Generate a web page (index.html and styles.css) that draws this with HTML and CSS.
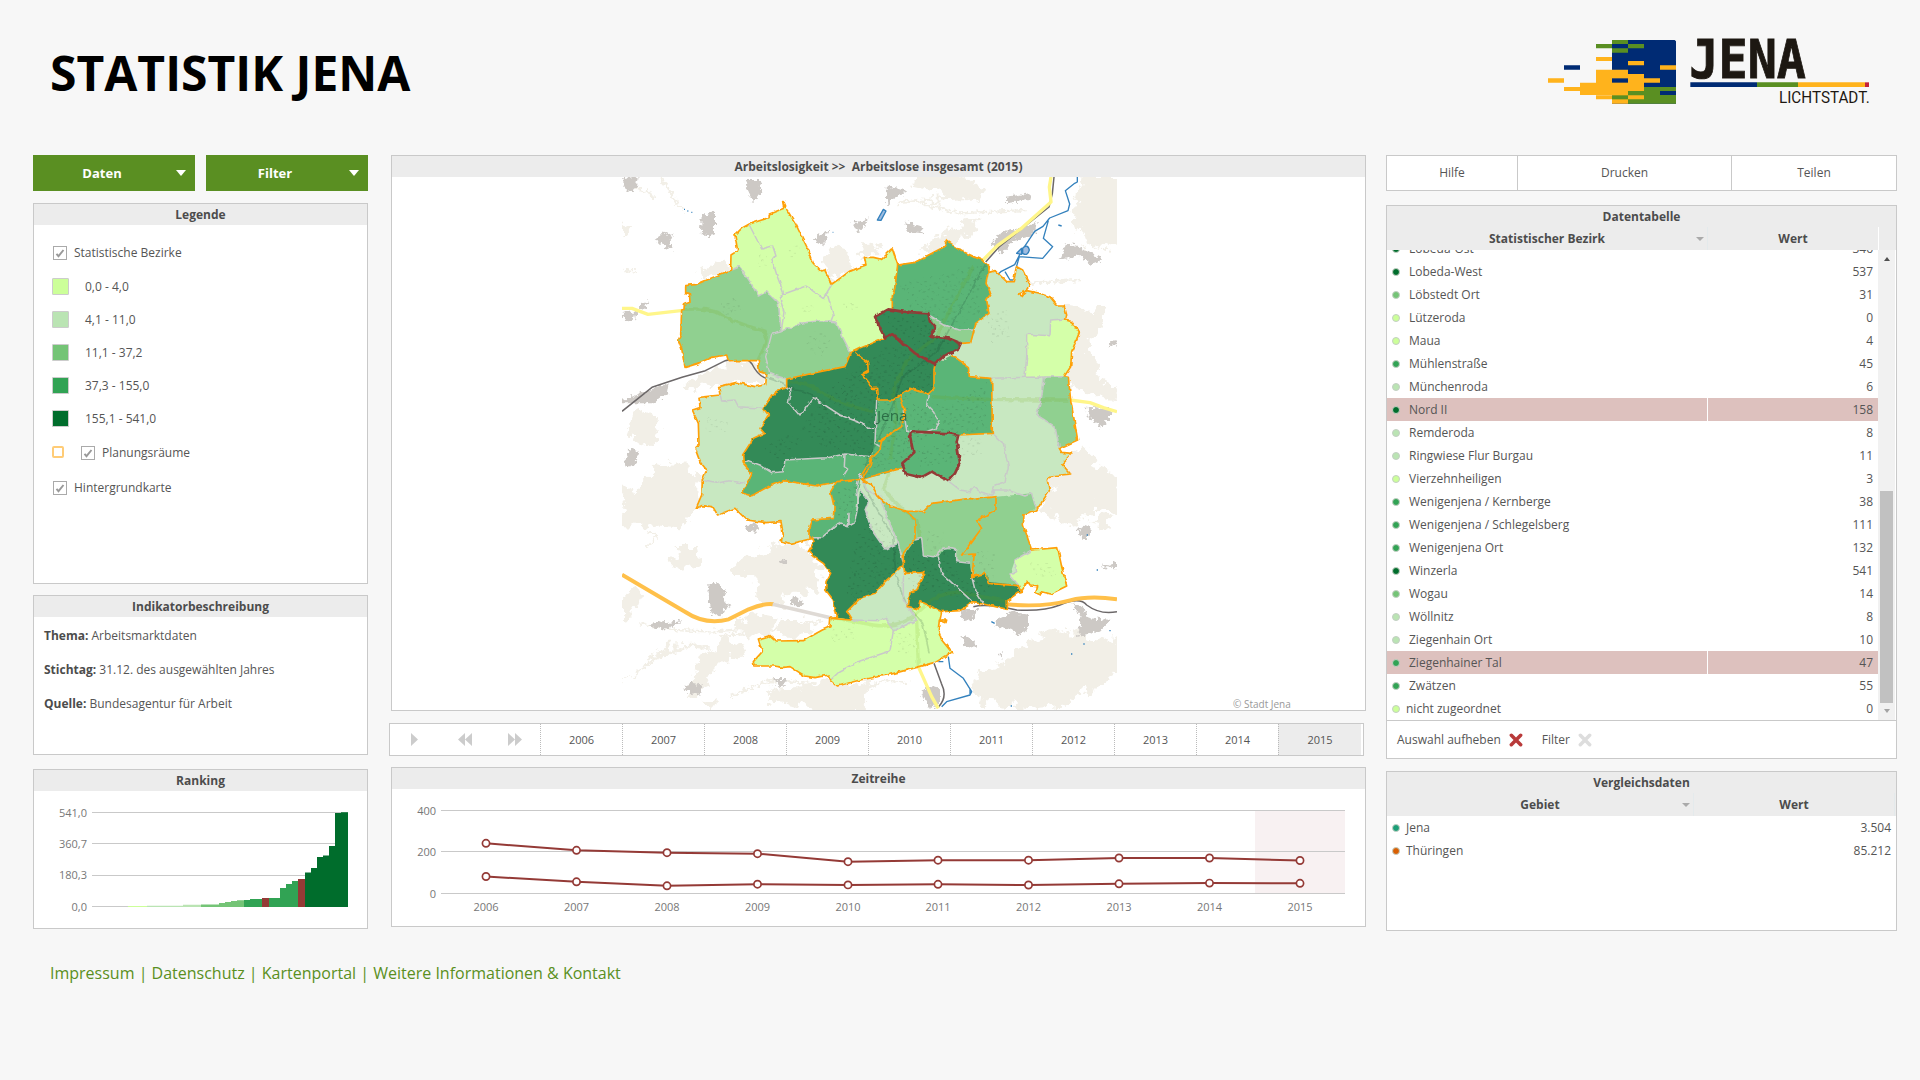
FILE: index.html
```
<!DOCTYPE html>
<html lang="de">
<head>
<meta charset="utf-8">
<title>Statistik Jena</title>
<link rel="stylesheet" href="styles.css">
</head>
<body>
<header class="top">
  <h1>STATISTIK JENA</h1>
  <svg class="logo" viewBox="0 0 1140 300" role="img" aria-label="Jena Lichtstadt">
    <path fill="#002b74" d="M246 60H434l4 4V251H246z"/>
    <path fill="#5a8f22" d="M246 60h48v12h48v13h-48v13h-48V85h-48V72h48zM342 201h96v50H294v-38h48z"/>
    <path fill="#002b74" d="M246 72h48v13h-48zM102 136h48v13h-48zM390 213h48v12h-48z"/>
    <path fill="#ffb31c" d="M198 111h48v12h-48zM294 123h48v13h-48zM390 136h48v13h-48zM198 149h96v13h48v13h48v13h-48v25h-48v38h-48v-13h-48v-12h48v-1h-48v-12h-48v-13h48zM54 175h48v13H54zM102 201h48v12h-48zM150 188h48v13h-48zM150 213h48v12h-48zM294 226h48v12h-48z"/>
    <path fill="#002b74" d="M246 175h48v13h-48z"/>
    <path fill="#5a8f22" d="M246 226h48v12h-48z"/>
    <text class="logo-name" x="478" y="175" textLength="350" lengthAdjust="spacingAndGlyphs">JENA</text>
    <path fill="#002b74" d="M481 187h200v14H481z"/><path fill="#5a8f22" d="M681 187h123v14H681z"/>
    <path fill="#ffb31c" d="M804 187h201v14H804z"/><path fill="#c4213a" d="M1005 187h12v14h-12z"/>
    <text class="logo-claim" x="747" y="250" textLength="272" lengthAdjust="spacingAndGlyphs">LICHTSTADT.</text>
  </svg>
</header>

<main class="board">
  <section class="col col-left">
    <div class="menus">
      <button class="menu"><span>Daten</span><i class="caret"></i></button>
      <button class="menu"><span>Filter</span><i class="caret"></i></button>
    </div>
    <article class="panel legend-panel">
      <h2>Legende</h2>
      <ul class="legend">
        <li class="layer"><span class="check"><svg viewBox="0 0 12 12"><path d="M2.5 6.8l2 2.4L9.5 3"/></svg></span>Statistische Bezirke</li>
        <li class="cls"><i class="swatch c1"></i>0,0 - 4,0</li>
        <li class="cls"><i class="swatch c2"></i>4,1 - 11,0</li>
        <li class="cls"><i class="swatch c3"></i>11,1 - 37,2</li>
        <li class="cls"><i class="swatch c4"></i>37,3 - 155,0</li>
        <li class="cls"><i class="swatch c5"></i>155,1 - 541,0</li>
        <li class="layer plan"><i class="outline"></i><span class="check"><svg viewBox="0 0 12 12"><path d="M2.5 6.8l2 2.4L9.5 3"/></svg></span>Planungsräume</li>
        <li class="layer last"><span class="check"><svg viewBox="0 0 12 12"><path d="M2.5 6.8l2 2.4L9.5 3"/></svg></span>Hintergrundkarte</li>
      </ul>
    </article>
    <article class="panel info-panel">
      <h2>Indikatorbeschreibung</h2>
      <div class="info">
        <p><b>Thema:</b> Arbeitsmarktdaten</p>
        <p><b>Stichtag:</b> 31.12. des ausgewählten Jahres</p>
        <p><b>Quelle:</b> Bundesagentur für Arbeit</p>
      </div>
    </article>
    <article class="panel rank-panel">
      <h2>Ranking</h2>
      <svg class="rank" width="333" height="137" viewBox="34 791 333 137">
        <path class="grid" d="M92 812.5H348M92 843.5H348M92 875.5H348M92 906.5H348"/>
        <g class="axis end"><text x="87" y="817">541,0</text><text x="87" y="848">360,7</text><text x="87" y="879">180,3</text><text x="87" y="911">0,0</text></g>
        <path fill="#cf9" d="M128 907v-1h19v1z"/>
        <path fill="#bae4b3" d="M147 907v-1.3h36v-1h18V907z"/>
        <path fill="#74c476" d="M201 907v-2.5h18v-1.5h6v-1h6v-1h6v-.8h7V907z"/>
        <path fill="#31a354" d="M244 907v-7h6v-1h12v7h7v-8h11v-10h6v-4h6v-3h6V907z"/>
        <path fill="#943a36" d="M262 907v-9h7v9zM298 907v-28h7v28z"/>
        <path fill="#31a354" d="M269 907v-9h11v9z"/>
        <path fill="#006d2c" d="M305 907v-34.500h6v-4.500h6v-11h6v-1.500h6v-9.500h6v-33h6v-.8h7V907z"/>
      </svg>
    </article>
  </section>

  <section class="col col-mid">
    <article class="panel map-panel">
      <h2 class="pre">Arbeitslosigkeit &gt;&gt;  Arbeitslose insgesamt (2015)</h2>
      <svg class="map" width="495" height="534" viewBox="6 21 1485 1602">
        <defs>
          <pattern id="houses" width="74" height="66" patternUnits="userSpaceOnUse">
            <path d="M3 5h5v4h-5zM14 12h4v6h-4zM25 3h7v4h-7zM41 14h4v4h-4zM55 7h5v6h-5zM66 20h4v4h-4zM8 28h6v4h-6zM22 33h4v5h-4zM35 25h6v6h-6zM51 36h4v4h-4zM62 42h6v4h-6zM5 50h4v4h-4zM18 56h7v4h-7zM33 47h4v6h-4zM45 57h6v4h-6zM68 60h4v4h-4zM29 17h3v3h-3zM48 24h3v3h-3z"/>
          </pattern>
          <filter id="coast" x="-10%" y="-10%" width="120%" height="120%" color-interpolation-filters="sRGB">
            <feTurbulence type="fractalNoise" baseFrequency="0.03" numOctaves="4" seed="7"/>
            <feDisplacementMap in="SourceGraphic" scale="62" xChannelSelector="R" yChannelSelector="G"/>
          </filter>
          <filter id="scatter" x="-10%" y="-10%" width="120%" height="120%" color-interpolation-filters="sRGB">
            <feTurbulence type="fractalNoise" baseFrequency="0.09" numOctaves="2" seed="3"/>
            <feDisplacementMap in="SourceGraphic" scale="26" xChannelSelector="R" yChannelSelector="G"/>
          </filter>
          <filter id="survey" x="-5%" y="-5%" width="110%" height="110%" color-interpolation-filters="sRGB">
            <feTurbulence type="fractalNoise" baseFrequency="0.055" numOctaves="2" seed="11"/>
            <feDisplacementMap in="SourceGraphic" scale="11" xChannelSelector="R" yChannelSelector="G"/>
          </filter>
          <path id="city" d="M490 95 500 118 525 158 543 195 565 240 580 280 605 303 614 300 636 342 660 325 690 303 738 285 733 262 760 262 785 268 817 237 833 285 885 277 920 258 970 232 980 212 1030 245 1088 272 1108 290 1105 308 1125 302 1160 335 1180 335 1190 290 1208 300 1230 345 1215 365 1195 372 1205 378 1220 362 1260 370 1290 380 1310 405 1332 405 1340 435 1337 450 1355 455 1378 488 1355 545 1352 590 1332 620 1345 622 1352 690 1373 810 1318 835 1325 847 1355 850 1325 882 1352 912 1290 918 1282 930 1288 962 1250 1020 1212 1033 1210 1065 1235 1140 1313 1133 1325 1190 1340 1248 1292 1272 1265 1265 1262 1275 1247 1268 1253 1250 1230 1248 1222 1235 1203 1267 1192 1270 1162 1292 1162 1318 1090 1302 1058 1298 1020 1322 965 1325 960 1350 980 1350 978 1358 958 1350 955 1380 965 1410 995 1447 945 1478 810 1513 720 1530 652 1548 632 1530 625 1515 585 1523 555 1518 510 1490 490 1492 462 1488 402 1488 400 1475 427 1445 415 1407 450 1397 470 1413 550 1412 580 1395 607 1380 630 1370 632 1345 652 1343 640 1290 617 1260 618 1235 632 1210 610 1180 580 1160 565 1145 582 1115 578 1105 545 1113 513 1120 483 1113 490 1095 483 1055 440 1058 380 1050 345 1015 293 1035 278 1010 245 1007 228 1015 245 975 247 930 260 900 240 875 225 835 237 825 235 760 217 720 240 713 237 682 300 675 296 650 350 637 405 650 437 645 440 612 418 605 415 572 325 572 320 555 275 562 235 580 195 592 185 535 175 510 182 495 185 420 192 418 193 403 210 397 208 370 197 368 197 347 230 343 332 300 333 255 353 242 345 195 365 175 388 162 447 143 448 132 492 115 488 95z"/>
        </defs>
        <g filter="url(#coast)">
          <path class="forest" d="M6 150l25 30-25 8zM232 305l92-28 15 28-97 28zM606 300l25-66 30-10 32 50 0 35-57 28-25-30zM710 248l30-32 28 18 17 22-50 0-5 20zM830 100l250-15 10-30-60-45h-130l-30 30 70 15 40 15-10 12-120 8zM980 185l110-50-50 65-80 45-60 0zM1390 15h115v220l-60-10-40 20-20-60-30-10zM1330 410l45 5 10 15 50-20 26 5-18 60-40 30 20 70 28 60-40 20-50-10-20-50 20-80zM1340 640l60 0 90 15v30l-90-10zM1400 890l105 20v120l-80-20-60 60-70-30-30-20 50-90zM30 745l40-25 50 25-10 70-60 10-25-40zM200 640l130-65 70 5 35 60-35 5-50-13-54 13-80 22zM20 780h90l20 10-80 20zM0 970l70-30 60-60 30 10 20-20 20 20 40 30-10 95-40 60-180-10zM170 1125l60 0 10 45-20 30-20-15-50 5 20-30zM12 1280l20-25 25 20-20 60-25 5zM330 1180l90-30 60-30 40-15 60 40 30 40-15 30 0 50-80 0-40 60-60-30-10-80-80-10zM360 1350l50-30 50 30 0 50-100-10zM480 1350h70l40 10-40 40-60 0zM6 1530l140-100 120-5v15l-80-5-90 40-60 40zM250 1450l60-40 80 20-10 30-60 5-50 50-30 60-40 10 20-60zM440 1560l130-15 90-20 90 10-10 60-40 40h-100l-60-30-80-10zM240 1610l50-35 0 30-15 20zM1060 1530l100-60 70-60 110-30 80 40 85-20v110l-80 40-100 60-100 10-160-30zM1180 830l60 0 80 40 70-40 40 40-60 50-70 30-50 80-60-10zM1400 1060l60-30 30 10-30 30z"/>
        </g>
        <g class="tracks" filter="url(#scatter)"><path d="M120 25l25 30 20 40 25 25M40 50l50 20 12 22M10 300l35 4M80 1080l30 20-30 35M60 1360l100 20 120 5 160-15M300 1400l150-20 160-30M330 1580l120-50 140 10M735 1560l60-30 70 10M900 100l120 30 200-10M1000 340l100 20 100-20 180-10"/></g>
        <g filter="url(#scatter)">
        <path class="built" d="M6 25l50-5-5 30-30 20zM380 30l40 0 5 35-25 35-22-45zM245 135l40-10 0 65-25 10-17-15zM104 210l30-25 22 10-8 20 12 10 0 15-22-5-10-10zM585 205l40-25-5 20-10 25-20-10zM697 160l50-15-15 25-15 20-10-20zM800 50l30 5 30 10-40 20-18 25zM856 155l50 15 2 20-48-5zM1158 80l75-10-5 20-70 10zM1140 190l90-25 20-10-5 40-70 20-30 35-30-30zM1318 270l20-50 40 10 75 40-40 15-35-30-40 10zM60 400l28-8-12 25-16-3zM10 425l40 0-5 20-30 10zM6 690l140-50-5 30-40 30-95 0zM1400 710l70 5 3 25-30 30-40-30zM1460 530l30-20v12l-28 10zM12 870l20-35 25 10-15 40-20 5zM376 1065l38-2-2 22-30-2zM265 1240l35 0 5 25 15-5-8 35 18 12-20 12-5 20-30-10-8-40zM480 1165l25 12-22 10zM505 1295l20-15 28 18-18 14zM85 1365l45-12 20 5 35-5-40 25-20 0zM193 1555l15-18 40 8-5 25-25 5zM466 1527l38 0-15 20-20 0zM1020 1318l50-2-10 30-30 5zM1127 1350l50-25 50 10 0 40-30 20-30-20-40-5zM1354 1300l30 5 25 40 65 5-30 30-70 20 10-60zM1375 1075l30-10 10 20-20 25-15-10zM1440 1190l51-15v20zM1020 1395l45 20-2 20-30-10zM1135 1455l12-10 0 22zM900 1570l20-20 40 5 0 50-30 10z"/>
        </g>
        <g class="rail"><path d="M6 724l90-72 90-30 70-20 60-30q60-20 80 10 20 40 50 45M1302 21l-5 50-10 40-150 120-40 45M1060 1310q40-10 130 10 80 5 130-15 60-25 80 0 40 30 91 20M942 1480l22 60q20 40-8 70"/></g>
        <g class="water"><path d="M1372 21v15l-8 4-28 22 13 40-5 20-55 22-20 25-25 15-40 60-20 40-40 20-35 33M1285 152l-15 53 28 25-30 35-70-5-10 35M985 1460l5 35 40 30 25 40-5 10-70 20-15 15M1155 305l15 25 10 0M1050 1555v18M1315 165l10 3"/><path class="pond" d="M772 150l18-32 8 5-15 28zM1208 235q15-15 20 5-5 20-20 10zM1190 250l15-15v18z"/><path d="M192 118h3M202 123h3M214 127h3M638 187h2M1114 1355l10 5M1400 1095h4M1353 1452h4M1390 1422h4M1172 1608h4M1430 1200h4M1468 1382h4M955 1475h15"/></g>
        <g class="road-yellow"><path d="M6 415h30l48 18 105-12M1293 21l-5 30 5 45-90 80-70 50-45 45M1350 690l60 8 40 15 41 12M895 1490l40 90 20 35"/></g>
        <path class="road-orange" d="M6 1214l190 112q60 40 130 22l60-30q50-20 75-15"/>
        <path class="road-gray" d="M458 1303l180 42"/>
        <path class="road-orange" d="M1160 1303q110 10 190-12 60-15 141-3"/>

        <g filter="url(#survey)">
        <use href="#city" fill="#c8e8c1"/>
        <path fill="#d4ffa9" d="M332 300 333 255 353 242 345 195 365 175 388 162 447 143 448 132 492 115 490 95 500 118 525 158 543 195 565 240 580 280 605 303 614 300 636 342 660 325 690 303 738 285 733 262 760 262 785 268 817 237 833 285 825 350 817 378 817 420 765 440 797 503 720 535 692 548 670 505 648 455 600 452 540 460 484 485 480 430 475 400 440 365 415 378 390 335 358 290z"/>
        <path fill="#90d090" d="M332 300 358 290 390 335 415 378 440 365 475 400 484 485 540 460 600 452 648 455 670 505 692 548 675 590 600 605 500 627 450 612 440 612 418 605 415 572 325 572 320 555 275 562 235 580 195 592 185 535 175 510 182 495 185 420 192 418 193 403 210 397 208 370 197 368 197 347 230 343z"/>
        <path fill="#5ab577" d="M833 285 885 277 920 258 970 232 980 212 1030 245 1088 272 1108 290 1098 340 1112 370 1100 390 1107 430 1067 460 1052 518 1022 520 985 505 930 450 817 420 817 378z"/>
        <path fill="#90d090" d="M930 437 975 465 1018 480 1065 480 1052 518 1022 520 985 505 945 500 930 497 948 475z"/>
        <path fill="#338a57" d="M500 627 560 615 600 605 675 590 692 548 720 535 797 503 765 440 805 418 850 425 925 430 930 455 948 475 930 498 985 505 1022 520 1013 540 975 555 945 582 942 655 925 672 870 655 845 670 820 690 775 690 770 780 765 830 750 860 675 855 620 863 495 870 490 905 455 908 420 885 385 872 370 880 368 855 400 805 433 790 420 775 445 735 430 715 455 675 500 650z"/>
        <path fill="#5ab577" d="M775 690 820 690 845 670 870 655 925 672 942 655 942 600 945 582 995 555 1045 590 1048 620 1115 625 1117 790 1015 795 1010 900 845 895 785 915 720 928 700 930 650 935 590 948 490 932 450 947 395 977 368 968 395 910 370 880 385 872 420 885 455 908 490 905 495 870 620 863 675 852 755 860 770 780z"/>
        <path fill="#c8e8c1" d="M1015 795 1117 790 1140 830 1140 940 1040 940 985 933 1005 910 1020 878z"/>
        <path fill="#5ab577" d="M650 935 725 905 715 960 710 1010 705 1055 685 1065 655 1060 605 1103 567 1105 567 1070 575 1050 640 1045 642 1010 632 965z"/>
        <path fill="#338a57" d="M720 965 745 995 735 1020 755 1080 795 1137 835 1120 845 1160 850 1185 795 1235 765 1270 720 1285 680 1325 695 1350 652 1343 640 1290 617 1260 618 1235 632 1210 610 1180 580 1160 565 1145 582 1115 578 1105 605 1103 655 1060 685 1068 705 1055 715 1000z"/>
        <path fill="#90d090" d="M780 980 805 1005 855 1023 910 1025 935 1000 1050 985 1060 988 1128 980 1235 970 1250 1015 1212 1033 1210 1065 1235 1140 1185 1170 1170 1215 1195 1245 1105 1235 1060 1220 1050 1180 1010 1175 1010 1140 970 1138 955 1160 910 1155 905 1105 885 1110 850 1160 835 1120z"/>
        <path fill="#338a57" d="M885 1110 905 1105 910 1155 955 1160 970 1138 1010 1140 1010 1175 1050 1180 1055 1220 1100 1210 1105 1235 1195 1245 1200 1265 1162 1292 1162 1318 1090 1302 1058 1298 1020 1322 965 1325 900 1295 895 1317 865 1310 870 1267 890 1260 915 1207 855 1210 850 1160z"/>
        <path fill="#d4ffa9" d="M632 1345 652 1343 695 1350 780 1352 800 1345 820 1383 890 1350 865 1312 895 1317 900 1295 965 1325 960 1350 955 1380 965 1410 995 1447 945 1478 810 1513 720 1530 652 1548 632 1530 625 1515 585 1523 555 1518 510 1490 490 1492 462 1488 402 1488 400 1475 427 1445 415 1407 450 1397 470 1413 550 1412 580 1395 607 1380 630 1370z"/>
        <path fill="#d4ffa9" d="M1220 493 1290 497 1292 450 1337 447 1355 455 1378 488 1355 545 1352 590 1332 620 1215 622 1220 560zM1235 1140 1313 1133 1325 1190 1340 1248 1292 1272 1265 1265 1262 1275 1247 1268 1253 1250 1230 1248 1222 1235 1203 1267 1195 1245 1170 1215 1190 1205 1185 1170z"/>
        <path fill="#90d090" d="M1273 620 1345 622 1352 690 1373 810 1318 835 1305 770 1250 735 1265 680z"/>
        <path fill="#5ab577" d="M870 797 880 785 990 790 1015 795 1010 815 1020 878 1005 910 985 933 935 905 903 923 857 912 847 880 880 850z"/>
        <g class="village"><path fill="url(#houses)" d="M300 400l50-15 15 40-50 20zM560 500l40-25 30 40-20 45-45-20zM505 235l30-10 10 20-35 20zM410 255h30v40h-25zM540 405h40v20h-40zM670 390h40v30h-40zM840 340l250-60-10 150-60 40-150-60zM1100 440l60-20 10 80-60 20zM260 740l70 15-10 30-60 0zM1020 800l60 0 10 50-60 10zM1070 1140l60 10-10 70-50-10zM920 1080l50 5v50l-50 10zM1230 1180l70 0 10 40-60 0zM620 1380l80-10 10 40-70 5zM830 1380l60 20-10 60-50-10z"/></g>
        <g class="town"><path fill="url(#houses)" d="M640 640l180-120 110 40 10 100-120 40-60 140-100 20-120-80zM780 700h220l100-70v150l-180 20-120 100-80 20zM780 430l130 10 80 80-60 40-110-80zM430 840l60-50 60 20-70 60zM650 960l60-20-10 110-50 0zM750 1030l90 120-10 60-100 80-50-20 20-140zM860 1130l50 30 60-20 60 80 90 30-70 40-120-30-60 0zM890 830l100-10 10 60-100 10z"/></g>
        <g class="road-over"><path d="M192 418q80-5 110 15 30 20 130 50 20 20-20 90M500 635q60 0 100 30 60 40 160 60M935 680q100 10 410 10M1060 290l-60 110-50 100-90 70-40 90 10 80-20 130M810 900l-20 60 60 60 40 30 10 60M1165 1295l-130-25q-50-10-100 20l-60 55q-60 30-115 20l-120-22M890 1350l5 140"/></g>
        <g class="rail-over"><path d="M440 620q50 15 80 40 60 0 100 60M1098 280l-150 270-100 70-50 140-60 120-5 70 85 150 10 120 30 80 50 60 20 90"/></g>

        <g class="district">
          <path d="M388 165 425 237 458 228 468 258 455 265 472 320 492 372 480 385 492 425 484 485M492 372 558 348 610 386 636 342M620 366 640 436 632 455"/>
          <path d="M332 300 358 290 390 335 415 378 440 365 475 400 484 485 540 460 600 452 648 455 670 505 692 548M484 485 455 493 437 560 450 612 500 627M300 677 305 693 345 690 355 710 430 715M247 932 290 940 325 932 375 940"/>
          <path d="M500 650 513 658 505 697 540 738 580 683 660 735 730 762 740 775 762 775M770 690 765 820 780 830M925 672 920 705 940 725 957 755 945 775 905 790 860 780 850 720M930 437 975 465 1018 480 1065 480"/>
          <path d="M370 880 385 872 420 885 455 908 490 905 495 870 620 863 675 852 755 860M675 852 673 890 683 897 672 915M720 910 710 955 715 1000 705 1055 687 1065 687 1030 685 1070 655 1060 605 1103 578 1103M720 960 745 995 735 1020 755 1080 795 1137 835 1120 845 1160M780 980 800 1040 835 1120 850 1180M720 910 740 960 780 980"/>
          <path d="M1220 493 1290 497 1292 450 1337 447M1220 493 1220 560 1215 622M1115 625 1215 622 1332 620M1273 620 1265 680 1250 735 1305 770 1318 835M1117 790 1150 820 1165 890 1155 935 1125 945 1115 970M985 933 1020 960 1050 965 1060 950 1080 965 1115 975 1125 960 1160 960 1215 978 1235 970 1248 1015"/>
          <path d="M885 1110 905 1105 910 1155 940 1160 955 1155 960 1140 985 1133 1010 1140 1010 1175 1050 1180M955 1160 965 1210 1060 1298M1055 1220 1065 1260 1090 1300M1235 1140 1185 1170 1190 1205 1170 1215 1195 1245 1200 1265M695 1350 780 1352 800 1345 820 1383 890 1350 850 1290 850 1210M820 1383 810 1443 720 1473 660 1503 632 1530"/>
        </g>
        <g class="planning">
          <use href="#city"/>
          <path d="M833 285 825 350 817 378 817 420M692 548 720 535 797 503M692 548 675 590 600 605 500 627 500 650 455 675 430 715 445 735 420 775 433 790 400 805 368 855 370 880 395 910 368 968 395 977 450 947 490 932 590 948 650 935 700 930 720 928M705 548 743 578 745 605 728 615 745 635 757 655 773 655 775 690 820 690 845 670 870 655 925 672 942 655 942 600 945 582M995 555 1045 590 1048 620 1115 625 1117 790 1015 795M1108 290 1098 340 1112 370 1100 390 1107 430 1067 460 1052 518 1022 520M840 670 855 730 845 770 785 810 780 840 755 865 725 915M845 770 775 815M755 865 750 890 725 928 785 910 845 895M650 935 632 965 642 1010 640 1045 575 1050 567 1070 567 1105 580 1105M725 928 755 945 775 980 805 1005 855 1023 910 1025 935 1000 1050 985 1060 988 1128 980 1128 1018 1070 1052 1085 1075 1025 1155 1063 1152 1055 1220 1095 1210 1105 1240 1195 1247 1203 1267M855 1023 885 1045 885 1105 850 1150 850 1185 795 1235 765 1270 720 1285 680 1325 695 1350 632 1345M850 1185 855 1210 915 1207 890 1260 870 1267 865 1310 895 1317 900 1295 965 1325"/>
        </g>
        <g class="selected"><path d="M765 440 805 418 850 425 925 430 930 455 948 475 930 498 985 505 1022 520 1013 540 975 555 945 582 885 550 817 493 795 503 780 475zM870 797 880 785 990 790 1015 795 1010 815 1020 878 1005 910 985 933 935 905 903 923 857 912 847 880 880 850z"/></g>
        </g>
        <text class="map-label" x="771" y="753">Jena</text>
      </svg>
      <span class="copyright">© Stadt Jena</span>
    </article>

    <nav class="timeline">
      <div class="player">
        <svg width="150" height="31" viewBox="390 724 150 31"><path d="M411 733v13l7-6.500zM472 733v13l-7-6.500zM465 733v13l-7-6.500zM508 733v13l7-6.500zM515 733v13l7-6.500z"/></svg>
      </div>
      <a>2006</a><a>2007</a><a>2008</a><a>2009</a><a>2010</a><a>2011</a><a>2012</a><a>2013</a><a>2014</a><a class="on">2015</a>
    </nav>

    <article class="panel series-panel">
      <h2>Zeitreihe</h2>
      <svg class="series" width="973" height="137" viewBox="392 789 973 137">
        <path fill="#f8f1f2" d="M1255 811h90v82h-90z"/>
        <path class="grid" d="M441 810.500h904M441 851.500h904M441 893.500h904"/>
        <g class="axis end"><text x="436" y="815">400</text><text x="436" y="856">200</text><text x="436" y="898">0</text></g>
        <g class="axis mid"><text x="486" y="910.500">2006</text><text x="576.500" y="910.500">2007</text><text x="667" y="910.500">2008</text><text x="757.500" y="910.500">2009</text><text x="848" y="910.500">2010</text><text x="938" y="910.500">2011</text><text x="1028.500" y="910.500">2012</text><text x="1119" y="910.500">2013</text><text x="1209.500" y="910.500">2014</text><text x="1300" y="910.500">2015</text></g>
        <g class="line">
          <path d="M486 843.300L576.500 850.300 667 852.700 757.500 853.700 848 861.700 938 860.200 1028.500 860.200 1119 858 1209.500 858 1300 860.500"/>
          <path d="M486 876.500L576.500 881.800 667 885.800 757.500 884.200 848 884.900 938 884.300 1028.500 885 1119 883.800 1209.500 883.100 1300 883.300"/>
        </g>
        <g class="dots">
          <circle cx="486" cy="843.300" r="3.600"/><circle cx="576.500" cy="850.300" r="3.600"/><circle cx="667" cy="852.700" r="3.600"/><circle cx="757.500" cy="853.700" r="3.600"/><circle cx="848" cy="861.700" r="3.600"/><circle cx="938" cy="860.200" r="3.600"/><circle cx="1028.500" cy="860.200" r="3.600"/><circle cx="1119" cy="858" r="3.600"/><circle cx="1209.500" cy="858" r="3.600"/><circle cx="1300" cy="860.500" r="3.600"/>
          <circle cx="486" cy="876.500" r="3.600"/><circle cx="576.500" cy="881.800" r="3.600"/><circle cx="667" cy="885.800" r="3.600"/><circle cx="757.500" cy="884.200" r="3.600"/><circle cx="848" cy="884.900" r="3.600"/><circle cx="938" cy="884.300" r="3.600"/><circle cx="1028.500" cy="885" r="3.600"/><circle cx="1119" cy="883.800" r="3.600"/><circle cx="1209.500" cy="883.100" r="3.600"/><circle cx="1300" cy="883.300" r="3.600"/>
        </g>
      </svg>
    </article>
  </section>

  <section class="col col-right">
    <nav class="tools"><a>Hilfe</a><a>Drucken</a><a>Teilen</a></nav>
    <article class="panel table-panel">
      <h2>Datentabelle</h2>
      <div class="thead"><span class="th name">Statistischer Bezirk<i class="sort"></i></span><span class="th val">Wert</span><span class="gap"></span></div>
      <div class="body">
        <ul class="rows">
          <li><span><i class="dot c5"></i>Lobeda-Ost</span><b>346</b></li>
          <li><span><i class="dot c5"></i>Lobeda-West</span><b>537</b></li>
          <li><span><i class="dot c3"></i>Löbstedt Ort</span><b>31</b></li>
          <li><span><i class="dot c1"></i>Lützeroda</span><b>0</b></li>
          <li><span><i class="dot c1"></i>Maua</span><b>4</b></li>
          <li><span><i class="dot c4"></i>Mühlenstraße</span><b>45</b></li>
          <li><span><i class="dot c2"></i>Münchenroda</span><b>6</b></li>
          <li class="sel"><span><i class="dot c5"></i>Nord II</span><b>158</b></li>
          <li><span><i class="dot c2"></i>Remderoda</span><b>8</b></li>
          <li><span><i class="dot c2"></i>Ringwiese Flur Burgau</span><b>11</b></li>
          <li><span><i class="dot c1"></i>Vierzehnheiligen</span><b>3</b></li>
          <li><span><i class="dot c4"></i>Wenigenjena / Kernberge</span><b>38</b></li>
          <li><span><i class="dot c4"></i>Wenigenjena / Schlegelsberg</span><b>111</b></li>
          <li><span><i class="dot c4"></i>Wenigenjena Ort</span><b>132</b></li>
          <li><span><i class="dot c5"></i>Winzerla</span><b>541</b></li>
          <li><span><i class="dot c3"></i>Wogau</span><b>14</b></li>
          <li><span><i class="dot c2"></i>Wöllnitz</span><b>8</b></li>
          <li><span><i class="dot c2"></i>Ziegenhain Ort</span><b>10</b></li>
          <li class="sel"><span><i class="dot c4"></i>Ziegenhainer Tal</span><b>47</b></li>
          <li><span><i class="dot c4"></i>Zwätzen</span><b>55</b></li>
          <li class="near"><span><i class="dot c1"></i>nicht zugeordnet</span><b>0</b></li>
        </ul>
        <div class="scroll"><i class="up"></i><i class="thumb"></i><i class="down"></i></div>
      </div>
      <div class="actions">
        <span>Auswahl aufheben</span><svg class="x red" viewBox="0 0 12 12"><path d="M2 2l8 8M10 2l-8 8"/></svg>
        <span class="second">Filter</span><svg class="x" viewBox="0 0 12 12"><path d="M2 2l8 8M10 2l-8 8"/></svg>
      </div>
    </article>
    <article class="panel compare-panel">
      <h2>Vergleichsdaten</h2>
      <div class="thead"><span class="th name">Gebiet<i class="sort"></i></span><span class="th val">Wert</span></div>
      <ul class="rows">
        <li class="near"><span><i class="dot jena"></i>Jena</span><b>3.504</b></li>
        <li class="near"><span><i class="dot thuer"></i>Thüringen</span><b>85.212</b></li>
      </ul>
    </article>
  </section>
</main>
<footer class="links"><a>Impressum</a> | <a>Datenschutz</a> | <a>Kartenportal</a> | <a>Weitere Informationen &amp; Kontakt</a></footer>
</body>
</html>
```
FILE: styles.css
```
* { box-sizing: border-box; }
body { margin: 0; height: 1080px; overflow: hidden; background: #f7f7f7; color: #555; font: 12px/18px "Open Sans", sans-serif; }
ul { list-style: none; margin: 0; padding: 0; }
p { margin: 0; }
.top { display: flex; justify-content: space-between; height: 155px; padding: 20px 10px 0 50px; }
h1 { margin: 20px 0 0; font-size: 48px; line-height: 66px; font-weight: 700; color: #000; }
.logo { width: 380px; height: 100px; }
.logo-name { font: bold 158px "DejaVu Sans Mono", monospace; fill: #1d1812; stroke: #1d1812; stroke-width: 2.5; }
.logo-claim { font: 52px "Roboto", sans-serif; fill: #1d1812; }

.board { display: grid; grid-template-columns: 356px 997px 511px; padding-left: 33px; height: 775px; align-items: start; }
.col { display: flex; flex-direction: column; }
.col-left { width: 335px; }
.panel { background: #fff; border: 1px solid #c9c9c9; position: relative; overflow: hidden; }
.panel h2 { margin: 0; height: 21px; background: #ececec; font-size: 12px; line-height: 22px; font-weight: 700; text-align: center; color: #4c4c4c; }
.panel svg { display: block; }
.pre { white-space: pre; }

.menus { display: flex; gap: 11px; margin-bottom: 12px; }
.menu { display: flex; align-items: center; width: 162px; height: 36px; padding: 0 9px 0 0; border: 0; background: #5a8f22; color: #fff; font: 700 13px "Open Sans", sans-serif; }
.menu span { flex: 1; padding-right: 5px; }
.caret { border: 5.5px solid transparent; border-top: 6px solid #fff; border-bottom: 0; }

.legend-panel { height: 381px; margin-bottom: 11px; }
.legend { padding: 10px 0 0 18px; }
.legend li { display: flex; align-items: center; height: 33px; }
.legend .layer { height: 35px; padding: 0 0 0 1px; }
.legend .plan { padding-left: 0; height: 36px; }
.legend .last { height: 34px; }
.check { width: 14px; height: 14px; border: 1px solid #aaa; margin-right: 7px; }
.check path { fill: none; stroke: #999; stroke-width: 1.900; }
.swatch { width: 17px; height: 17px; border: 1px solid #ccc; border-radius: 1px; margin-right: 16px; }
.outline { width: 12px; height: 12px; border: 2px solid #fc7; border-radius: 2px; margin: -2px 17px 0 0; }
.c1 { background: #cf9; } .c2 { background: #bae4b3; } .c3 { background: #74c476; } .c4 { background: #31a354; } .c5 { background: #006d2c; }
.jena { background: #1b9e77; } .thuer { background: #d95f02; }

.info-panel { height: 160px; margin-bottom: 14px; }
.info { padding: 10px; }
.info p { margin-bottom: 16px; }
.info b { color: #4c4c4c; }
.rank-panel { height: 160px; }
.grid { stroke: #c9c9c9; fill: none; }
.axis { fill: #777; font-size: 11px; }
.end { text-anchor: end; } .mid { text-anchor: middle; }

.col-mid { width: 977px; }
.map-panel { width: 975px; height: 556px; margin: 0 0 12px 2px; }
.map { margin-left: 230px; }
.copyright { position: absolute; left: 841px; bottom: -2px; font-size: 10px; line-height: 16px; color: #999; }
.map path, .map use { stroke-linejoin: round; }
.forest { fill: #f2efe7; } .built { fill: #cdc9c5; }
.tracks path { fill: none; stroke: #f2efe7; stroke-width: 7; }
.rail path { fill: none; stroke: #6c6869; stroke-width: 4.500; }
.water path { fill: none; stroke: #3381bd; stroke-width: 4; }
.water .pond { fill: #a0bce0; }
.road-yellow path { fill: none; stroke: #fff68a; stroke-width: 10; }
.road-orange { fill: none; stroke: #ffc04a; stroke-width: 12; }
.road-gray { fill: none; stroke: #dfdad5; stroke-width: 11; }
.village { opacity: .08; } .town { opacity: .11; }
.road-over path { fill: none; stroke: #73a400; stroke-width: 10; opacity: .14; }
.rail-over path { fill: none; stroke: #10372b; stroke-width: 5; opacity: .17; }
.district path { fill: none; stroke: #c9c9c9; stroke-width: 4.500; }
.planning path, .planning use { fill: none; stroke: #ffa007; stroke-width: 5; }
.selected path { fill: none; stroke: #943a36; stroke-width: 8; }
.map-label { font: 46px "Open Sans", sans-serif; fill: #25633f; opacity: .85; }

.timeline { display: flex; width: 975px; height: 33px; margin-bottom: 11px; background: #fff; border: 1px solid #c9c9c9; }
.player { width: 150px; flex: none; }
.player svg { display: block; fill: #ccc; }
.timeline a { flex: none; width: 82px; border-left: 1px dotted #bbb; text-align: center; font-size: 11px; line-height: 32px; }
.timeline .on { width: 83px; background: #ececec; }
.series-panel { width: 975px; height: 160px; margin-left: 2px; }
.line path { fill: none; stroke: #943a36; stroke-width: 2; }
.dots circle { fill: #fff; stroke: #943a36; stroke-width: 1.700; }

.tools { display: grid; grid-template-columns: 130px 214px 1fr; height: 36px; margin-bottom: 14px; background: #fff; border: 1px solid #c9c9c9; text-align: center; line-height: 34px; }
.tools a + a { border-left: 1px solid #c9c9c9; }
.table-panel { height: 554px; }
.thead { display: flex; height: 23px; background: #ececec; font-weight: 700; color: #4c4c4c; line-height: 24px; text-align: center; }
.th { position: relative; border-right: 1px solid #e4eaec; }
.name { width: 321px; } .val { width: 171px; }
.table-panel .val { border-right-color: #fff; }
.sort { position: absolute; right: 3px; top: 10px; border: 4px solid transparent; border-top-color: #aaa; border-bottom: 0; }
.body { display: flex; height: 471px; overflow: hidden; border-bottom: 1px solid #c9c9c9; }
.body .rows { width: 491px; margin-top: -13px; }
.rows li { display: grid; grid-template-columns: 320px 1fr; column-gap: 1px; height: 23px; line-height: 24px; }
.rows span { display: flex; align-items: center; padding-left: 5px; height: 23px; }
.rows b { font-weight: 400; text-align: right; padding-right: 5px; height: 23px; }
.rows .sel span, .rows .sel b { background: #ddc1be; }
.dot { width: 8px; height: 8px; border: 1px solid #c4cfc4; border-radius: 50%; margin: 1px 9px 0 0; }
.near .dot { margin-right: 6px; }
.scroll { width: 17px; background: #f1f1f1; display: flex; flex-direction: column; align-items: center; }
.up { border: 3.500px solid transparent; border-bottom: 4px solid #505050; border-top: 0; margin-top: 7px; }
.thumb { width: 13px; height: 212px; background: #c1c1c1; margin-top: 230px; }
.down { border: 3.500px solid transparent; border-top: 4px solid #a3a3a3; border-bottom: 0; margin-top: 6px; }
.actions { display: flex; align-items: center; height: 37px; padding-left: 10px; }
.second { margin-left: 19px; }
.x { width: 14px; height: 14px; margin-left: 8px; }
.x path { stroke: #ddd; stroke-width: 3; fill: none; stroke-linecap: round; }
.red path { stroke: #b93a3a; }
.compare-panel { height: 160px; margin-top: 12px; }
.compare-panel .name { width: 307px; } .compare-panel .val { width: 201px; }

.links { padding: 32px 0 0 50px; font-size: 16px; line-height: 22px; color: #5a8f22; }
```
